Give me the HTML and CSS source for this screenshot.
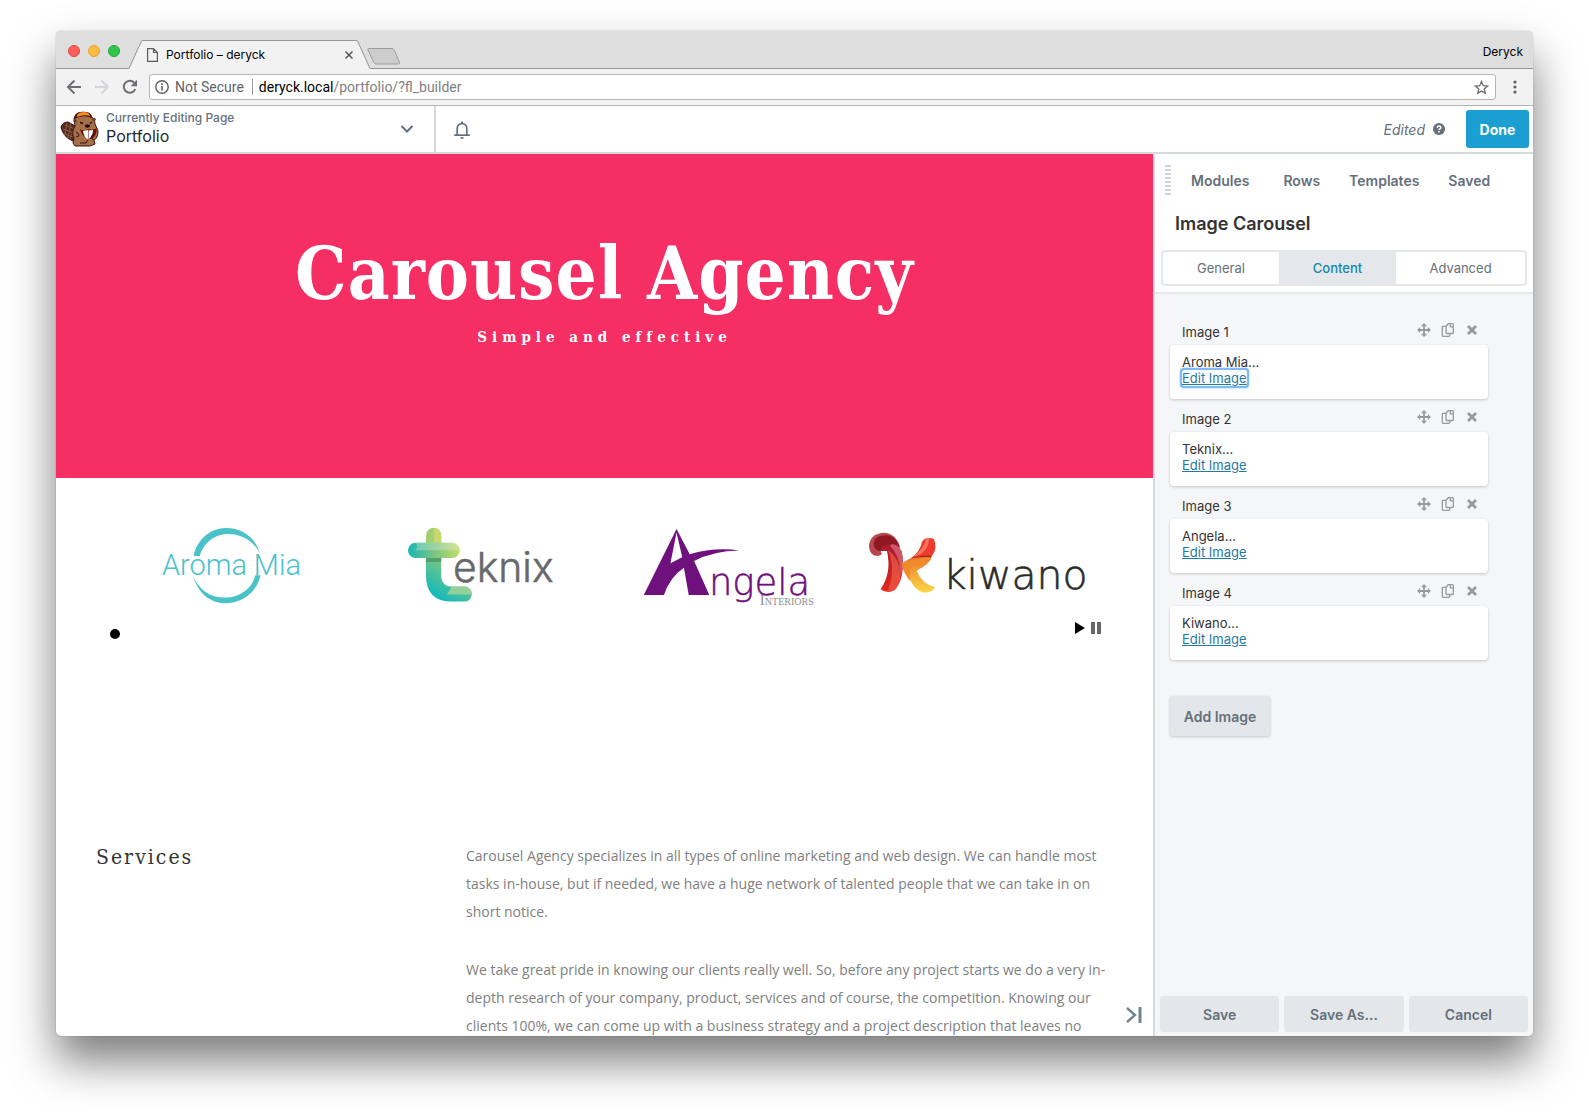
FILE: index.html
```html
<!DOCTYPE html>
<html lang="en">
<head>
<meta charset="utf-8">
<title>Portfolio – deryck</title>
<link rel="stylesheet" href="styles.css">
</head>
<body>
<svg width="0" height="0" class="defs" aria-hidden="true">
  <symbol id="i-move" viewBox="0 0 14 14"><path d="M7 0l3 3.200H7.900v2.900h2.900V4L14 7l-3.200 3V7.900H7.900v2.900H10L7 14l-3-3.200h2.100V7.900H3.200V10L0 7l3.200-3v2.100h2.900V3.200H4z"/></symbol>
  <symbol id="i-copy" viewBox="0 0 14 14"><path fill="none" stroke="currentColor" stroke-width="1.300" stroke-linejoin="round" d="M5 3.200L7.200.7h4.400a.7.7 0 0 1 .7.7v8.400a.7.7 0 0 1-.7.700H5.700a.7.7 0 0 1-.7-.7zM9.300.9v2.900h2.800M5 3.300H2a.7.7 0 0 0-.7.7v8.600a.7.7 0 0 0 .7.700h6a.7.7 0 0 0 .7-.7v-2"/></symbol>
  <symbol id="i-x" viewBox="0 0 14 14"><path fill="none" stroke="currentColor" stroke-width="2.800" d="M3 3l8 8M11 3l-8 8"/></symbol>
</svg>

<div class="window">
  <div class="tabstrip">
    <div class="lights"><span class="light red"></span><span class="light yellow"></span><span class="light green"></span></div>
    <div class="tab">
      <svg class="tab-shape" viewBox="0 0 244 29"><path d="M0 28.500h1L13 2q.7-1.500 2-1.500H228q1.300 0 2 1.500L242 28.500h2V29H0z" fill="#f2f2f2"/><path d="M0 28.500h1L13 2q.7-1.500 2-1.500H228q1.300 0 2 1.500L242 28.500h2" fill="none" stroke="#949494"/></svg>
      <svg class="doc" width="11" height="14" viewBox="0 0 11 14" fill="none" stroke="#5c5c5c" stroke-width="1.200"><path d="M.6.6h5.900l3.900 3.900v8.900H.6zM6.500.6v3.900h3.900"/></svg>
      <span class="tab-title">Portfolio – deryck</span>
      <button class="tab-close" aria-label="Close tab"><svg width="8" height="8" viewBox="0 0 8 8" stroke="#555" stroke-width="1.500"><path d="M.5.5l7 7M7.500.5l-7 7"/></svg></button>
    </div>
    <button class="new-tab" aria-label="New tab"><svg width="34" height="17" viewBox="0 0 34 17"><path d="M1.500.5H25q1.500 0 2.200 1.500L32.500 14.500q.6 1.500-1 1.500H9Q7.500 16 6.800 14.500L1 2Q.5.500 1.500.5z" fill="#cdcdcd" stroke="#9d9d9d"/></svg></button>
    <span class="profile">Deryck</span>
  </div>

  <div class="toolbar">
    <button class="nav" aria-label="Back"><svg width="16" height="16" viewBox="0 0 16 16" fill="none" stroke="#6e6f73" stroke-width="2"><path d="M15 8H2M8.500 1.500L2 8l6.500 6.500"/></svg></button>
    <button class="nav" aria-label="Forward"><svg width="16" height="16" viewBox="0 0 16 16" fill="none" stroke="#d4d5d8" stroke-width="2"><path d="M1 8h13M7.500 1.500L14 8l-6.500 6.500"/></svg></button>
    <button class="nav" aria-label="Reload"><svg width="16" height="16" viewBox="0 0 16 16"><path d="M13.300 10.200A6 6 0 1 1 12.300 3.800" fill="none" stroke="#6e6f73" stroke-width="2"/><path d="M15 .8v6.400H8.600z" fill="#6e6f73"/></svg></button>
    <div class="address">
      <svg width="14" height="14" viewBox="0 0 14 14"><circle cx="7" cy="7" r="6.200" fill="none" stroke="#5e5f63" stroke-width="1.400"/><path d="M6.200 6h1.600v4.500H6.200zM6.200 3.300h1.600v1.600H6.200z" fill="#5e5f63"/></svg>
      <span class="secure">Not Secure</span>
      <span class="url"><b>deryck.local</b>/portfolio/?fl_builder</span>
      <svg class="star" width="15" height="15" viewBox="0 0 15 15" fill="none" stroke="#6b6c70" stroke-width="1.300"><path d="M7.500 1.500l1.700 4.200 4.500.3-3.500 2.900 1.100 4.400-3.800-2.400-3.800 2.400 1.100-4.400L1.300 6l4.500-.3z"/></svg>
    </div>
    <button class="menu" aria-label="Menu"><svg width="4" height="14" viewBox="0 0 4 14" fill="#5e5f63"><circle cx="2" cy="2" r="1.600"/><circle cx="2" cy="7" r="1.600"/><circle cx="2" cy="12" r="1.600"/></svg></button>
  </div>

  <header class="builder-bar">
    <button class="page-menu">
      <svg class="beaver" width="39" height="36" viewBox="0 0 39 36">
        <path d="M1 16Q3 11 8 11l9 5-4 14Q3 26 1 16z" fill="#572a20" stroke="#35120e"/>
        <path d="M3 18l11 4M5 14l10 4M4 23l9 3M7 12L5 24M11 12l-3 15M15 15l-5 13" stroke="#946246" stroke-width=".9"/>
        <path d="M14 7Q20 2 29 4q6 3 6 9l3 7q0 7-4 9l1 4-5 2H15l-2-3 1-5Q11 22 15 15z" fill="#a56f48" stroke="#3b150f"/>
        <path d="M14 8Q14 1 22 .8q8-.8 10 4.200v2Q23 3 14 8z" fill="#4a1512"/>
        <path d="M17 4q2-3 7-3 5 0 6 4-6-2-13 1z" fill="#f48a24"/>
        <circle cx="15" cy="10" r="1.800" fill="#6d3a25"/><circle cx="34" cy="8.500" r="1.800" fill="#6d3a25"/>
        <path d="M20 11.500l3 1M32 11l-2 1.500" stroke="#2c0f0c" stroke-width="1.500"/>
        <path d="M20 18q4 3 8 0 5 2 9-1-1 11-7 11-8-1-10-10z" fill="#6a100d"/>
        <ellipse cx="27.500" cy="15" rx="2.600" ry="1.700" fill="#220b0a"/>
        <path d="M23 20l5-1v9q-4-1-5-8zM28.500 19.500L33 19q0 7-4.500 9z" fill="#fff"/>
        <path d="M16 21q3 1 3 4l-3 1M34 23q-3 1-3 4l3 2M20 32h6l2-3" fill="none" stroke="#3b150f"/>
      </svg>
      <span class="page-text"><small>Currently Editing Page</small><span>Portfolio</span></span>
      <svg class="chev" width="14" height="8" viewBox="0 0 14 8" fill="none" stroke="#65707b" stroke-width="2"><path d="M1.500 1L7 6.500 12.500 1"/></svg>
    </button>
    <button class="bell" aria-label="Notifications"><svg width="16" height="18" viewBox="0 0 16 18"><path d="M3.200 14V7.500C3.200 4.600 5.300 2.600 8 2.600s4.800 2 4.800 4.900V14" fill="none" stroke="#65707b" stroke-width="1.700"/><path d="M7 .5h2v2H7zM.2 13.200h15.600V15H.2zM6 16.200h4Q9.700 18 8 18t-2-1.800z" fill="#65707b"/></svg></button>
    <span class="edited">Edited</span>
    <svg class="help" width="12" height="12" viewBox="0 0 12 12"><circle cx="6" cy="6" r="6" fill="#65707b"/><path d="M4.200 4.700Q4.300 3 6 3t1.800 1.500Q7.800 5.500 6.800 6q-.8.4-.8 1.100" fill="none" stroke="#fff" stroke-width="1.500"/><path d="M5.200 8h1.600v1.500H5.200z" fill="#fff"/></svg>
    <button class="done">Done</button>
  </header>

  <div class="workspace">
    <main class="site">
      <section class="hero">
        <h1>Carousel Agency</h1>
        <p>Simple and effective</p>
      </section>

      <section class="carousel">
        <div class="slides">
          <svg viewBox="0 0 250 100" role="img" aria-label="Aroma Mia">
            <g fill="#49c2c8"><path d="M88.700 39C92 22 106 11 121 11C138 11 151 21 155 36.500C149 24 137 17 123 17C109 17 98 27 95 39z"/><path d="M88.300 59C93 76 105 86.300 121 86.300C138 86.300 152 75 155.700 58.300H150.300C148 71 135 80.700 120 80.700C105 80.700 94 73 88.300 59z"/>
            <text x="57" y="58" class="aroma">Aroma</text><text x="149" y="58" class="aroma">Mia</text></g>
          </svg>
          <svg viewBox="0 0 250 100" role="img" aria-label="teknix">
            <defs>
              <linearGradient id="t1" x1="0" x2="1"><stop offset="0" stop-color="#16b8b4"/><stop offset=".45" stop-color="#72c287"/><stop offset="1" stop-color="#c5dc6a"/></linearGradient>
              <linearGradient id="t2" gradientUnits="userSpaceOnUse" x1="78" y1="75" x2="98" y2="45"><stop offset="0" stop-color="#19bab8"/><stop offset="1" stop-color="#8bc878"/></linearGradient>
            </defs>
            <path d="M71 27v-8.500a7.600 7.600 0 0 1 15.300 0V27z" fill="#a3cf73"/><path d="M79 11a7.600 7.600 0 0 1 7.300 7.500V27H79z" fill="#c5d96d"/>
            <path d="M71 40v18q0 26.700 26 26.700h12.500a7.500 7.500 0 0 0 0-15H98Q86.300 69.700 86.300 58V40z" fill="url(#t2)"/>
            <path d="M97 69.700h12.500q7 0 7.500 8H92z" fill="#a5d49a" opacity=".8"/>
            <path d="M71 40h15.300v5H71z" fill="#48925f" opacity=".7"/>
            <rect x="53" y="25.700" width="52" height="15.300" rx="7.600" fill="url(#t1)"/>
            <path d="M60.600 25.700h36.800q7.600 0 7.600 7.600H60q4-3 .6-7.600z" fill="#fff" opacity=".25"/>
            <text x="98" y="65" class="teknix">eknix</text>
          </svg>
          <svg viewBox="0 0 250 100" role="img" aria-label="Angela Interiors">
            <path fill="#6f117c" fill-rule="evenodd" d="M71.600 12L38.800 78H59Q65 60 79 50.700L83.800 78h20.600L89.200 44Q108 34 134.500 33.500Q109 30 84.800 37.300zM71.600 15.500L65.500 46.300L77.300 40.300z"/>
            <text x="104" y="78" class="angela">ngela</text><text x="155" y="88" class="interiors">Interiors</text>
          </svg>
          <svg viewBox="0 0 250 100" role="img" aria-label="kiwano">
            <defs>
              <linearGradient id="k1" x1="0" x2="0" y1="0" y2="1"><stop offset="0" stop-color="#a81c2d"/><stop offset="1" stop-color="#e2261d"/></linearGradient>
              <linearGradient id="k2" x1="0" x2="0" y1="0" y2="1"><stop offset="0" stop-color="#ee7623"/><stop offset="1" stop-color="#fbd84c"/></linearGradient>
            </defs>
            <path d="M46 30Q42 16 29.500 15.700Q15 17 15 30Q16 39 24 39L27.800 37.500L26.800 34L34 28z" fill="#b8484f"/>
            <path d="M19.700 25Q22 18 32 18.300Q43 19 46 32Q34 24 25 34Q19 32 19.700 25z" fill="#8f1822"/>
            <path d="M25 34Q29 27 36 27Q47 28 48.400 38Q51 62 40.700 73Q34 77.500 26.500 72.300Q38 56 33 34z" fill="url(#k1)"/>
            <path d="M38 27Q47 28 48.400 38Q50 48 47 59Q46 38 36 29z" fill="#d0566b"/>
            <path d="M34 33Q46 42 47 57Q46 67 41 73Q36 75 34 74Q42 52 34 33z" fill="#f0644c" opacity=".65"/>
            <path d="M55 43Q67 34 68 25Q71 19 80 22Q84 31 78 39Q70 45 55 43z" fill="#ee3a2d"/>
            <path d="M58 40Q71 32 72 21Q77 19 74 28Q71 38 58 40z" fill="#f98366" opacity=".8"/>
            <path d="M54 43Q65 38 78 39Q70 46 54 43z" fill="#861d1b"/>
            <path d="M47.800 46.300Q57 39 77.800 40Q76 47 62.600 53.700Q68 67 81.200 70.300Q78 76 69.400 75.700Q60 73 56 62z" fill="url(#k2)"/>
            <path d="M47.800 47Q60 42 77 40.500Q69 49 58 50Q54 56 57 65Q49 56 47.800 47z" fill="#f08a2d"/>
            <text x="89" y="72" class="kiwano">kiwano</text>
          </svg>
        </div>
        <div class="controls">
          <button class="dot" aria-label="Slide 1"></button>
          <span class="playback">
            <button aria-label="Play"><svg width="10" height="12" viewBox="0 0 10 12"><path d="M0 0l10 6-10 6z"/></svg></button>
            <button aria-label="Pause"><svg width="10" height="12" viewBox="0 0 10 12" fill="#666"><path d="M0 0h4v12H0zM6 0h4v12H6z"/></svg></button>
          </span>
        </div>
      </section>

      <section class="services">
        <h2>Services</h2>
        <div class="copy">
          <p>Carousel Agency specializes in all types of online marketing and web design. We can handle most tasks in-house, but if needed, we have a huge network of talented people that we can take in on short notice.</p>
          <p>We take great pride in knowing our clients really well. So, before any project starts we do a very in-depth research of your company, product, services and of course, the competition. Knowing our clients 100%, we can come up with a business strategy and a project description that leaves no</p>
        </div>
      </section>
      <button class="collapse" aria-label="Collapse panel"><svg width="16" height="16" viewBox="0 0 16 16"><path d="M1 1l8 7-8 7" fill="none" stroke="#71838f" stroke-width="2.400"/><path d="M12.500 0h3v16h-3z" fill="#71838f"/></svg></button>
    </main>

    <aside class="panel">
      <div class="panel-head">
        <nav class="sections">
          <span class="grip"></span>
          <a href="#modules">Modules</a><a href="#rows">Rows</a><a href="#templates">Templates</a><a href="#saved">Saved</a>
        </nav>
        <h2>Image Carousel</h2>
        <div class="segments"><button>General</button><button class="active">Content</button><button>Advanced</button></div>
      </div>
      <div class="panel-body">
        <article class="item"><div class="item-head"><span>Image 1</span><span class="tools"><button aria-label="Move"><svg><use href="#i-move"/></svg></button><button aria-label="Copy"><svg><use href="#i-copy"/></svg></button><button aria-label="Remove"><svg><use href="#i-x"/></svg></button></span></div><div class="card">Aroma Mia...<br><a href="#edit1" class="focused">Edit Image</a></div></article>
        <article class="item"><div class="item-head"><span>Image 2</span><span class="tools"><button aria-label="Move"><svg><use href="#i-move"/></svg></button><button aria-label="Copy"><svg><use href="#i-copy"/></svg></button><button aria-label="Remove"><svg><use href="#i-x"/></svg></button></span></div><div class="card">Teknix...<br><a href="#edit2">Edit Image</a></div></article>
        <article class="item"><div class="item-head"><span>Image 3</span><span class="tools"><button aria-label="Move"><svg><use href="#i-move"/></svg></button><button aria-label="Copy"><svg><use href="#i-copy"/></svg></button><button aria-label="Remove"><svg><use href="#i-x"/></svg></button></span></div><div class="card">Angela...<br><a href="#edit3">Edit Image</a></div></article>
        <article class="item"><div class="item-head"><span>Image 4</span><span class="tools"><button aria-label="Move"><svg><use href="#i-move"/></svg></button><button aria-label="Copy"><svg><use href="#i-copy"/></svg></button><button aria-label="Remove"><svg><use href="#i-x"/></svg></button></span></div><div class="card">Kiwano...<br><a href="#edit4">Edit Image</a></div></article>
        <button class="add">Add Image</button>
      </div>
      <footer class="panel-foot"><button>Save</button><button>Save As...</button><button>Cancel</button></footer>
    </aside>
  </div>
</div>
</body>
</html>
```
FILE: styles.css
```css
* { box-sizing: border-box; }
body {
  margin: 0;
  padding: 31px 56px 80px;
  height: 100vh;
  background: #fff;
  font-family: Inter, "Liberation Sans", sans-serif;
  font-size: 13px;
  color: #333;
}
button {
  margin: 0;
  padding: 0;
  border: 0;
  background: none;
  font: inherit;
  color: inherit;
  display: flex;
  align-items: center;
  justify-content: center;
}
h1, h2, p { margin: 0; }
svg { display: block; flex: none; }
.defs { position: absolute; }

.window {
  height: 100%;
  display: flex;
  flex-direction: column;
  overflow: hidden;
  border-radius: 5px;
  background: #fff;
  box-shadow: 0 25px 45px rgba(0, 0, 0, .52), 0 0 1px rgba(0, 0, 0, .5);
}

/* Browser tabs */
.tabstrip {
  flex: none;
  height: 38px;
  display: flex;
  align-items: flex-end;
  background: #dedede;
  border-bottom: 1px solid #949494;
  color: #000;
}
.lights { display: flex; gap: 8px; padding: 0 8px 11px 12px; }
.light { width: 12px; height: 12px; border-radius: 50%; border: 1px solid #e0443e; background: #fc605b; }
.yellow { border-color: #e0a32e; background: #fdbc40; }
.green { border-color: #1fa535; background: #30c748; }
.tab {
  position: relative;
  width: 244px;
  height: 29px;
  margin-bottom: -1px;
  display: flex;
  align-items: center;
  gap: 8px;
  padding: 0 19px 0 19px;
}
.tab-shape { position: absolute; left: 0; top: 0; width: 100%; height: 100%; }
.doc, .tab-title, .tab-close { position: relative; }
.tab-title { flex: 1; font-size: 12px; }
.new-tab { margin: 0 0 3px -5px; }
.profile { margin-left: auto; padding: 0 10px 9px 0; font-size: 12px; }

/* Address row */
.toolbar {
  flex: none;
  height: 37px;
  display: flex;
  align-items: center;
  gap: 12px;
  padding: 0 16px 0 10px;
  background: #f2f2f2;
  border-bottom: 1px solid #b3b3b3;
  font-family: Roboto, "Liberation Sans", sans-serif;
  font-size: 14px;
}
.nav { width: 16px; height: 16px; }
.address {
  flex: 1;
  height: 26px;
  display: flex;
  align-items: center;
  gap: 6px;
  padding: 0 6px 0 5px;
  margin: 0 5px 0 -1px;
  background: #fff;
  border: 1px solid #b5b5b5;
  border-radius: 3px;
  color: #808080;
}
.secure { padding-right: 8px; border-right: 1px solid #9a9a9a; color: #5f6368; }
.url { flex: 1; }
.url b { font-weight: 400; color: #000; }

/* Builder bar */
.builder-bar {
  flex: none;
  height: 48px;
  display: flex;
  align-items: center;
  padding-right: 4px;
  border-bottom: 2px solid #d5dadd;
  color: #65707b;
}
.page-menu {
  width: 380px;
  height: 100%;
  padding: 0 20px 0 4px;
  justify-content: flex-start;
  border-right: 2px solid #d5dadd;
  text-align: left;
}
.page-text { flex: 1; display: flex; flex-direction: column; padding: 0 0 4px 7px; font-size: 16px; line-height: 18px; color: #23282d; }
.page-text small { font-size: 12px; font-weight: 500; color: #65707b; }
.bell { margin: 2px auto 0 18px; }
.edited { font-size: 14px; font-style: italic; }
.help { margin: 0 21px 0 8px; }
.done {
  width: 63px;
  height: 38px;
  border-radius: 3px;
  background: #1a9fd0;
  color: #fff;
  font-size: 14px;
  font-weight: 700;
}

.workspace { flex: 1; min-height: 0; display: flex; }

/* Edited page */
.site { position: relative; flex: 1; min-width: 0; overflow: hidden; }
.hero {
  height: 324px;
  padding-top: 73px;
  background: #f52e63;
  color: #fff;
  text-align: center;
  font-family: "Roboto Slab", "DejaVu Serif Condensed", "DejaVu Serif", serif;
  font-weight: 700;
}
.hero h1 { font-size: 72px; line-height: 94px; letter-spacing: 1px; }
.hero p { font-size: 15px; line-height: 32px; letter-spacing: 5px; }
.carousel { padding: 39px 49px 0; }
.slides { display: grid; grid-template-columns: repeat(4, 1fr); }
.slides svg { width: 100%; }
.aroma { font: 300 29px Roboto, sans-serif; }
.teknix { font: 300 41px Inter, sans-serif; fill: #67686c; stroke: #67686c; stroke-width: .5; }
.angela { font: 200 37px "DejaVu Sans", sans-serif; fill: #6f117c; stroke: #6f117c; stroke-width: .5; }
.interiors { font: 15px "Liberation Serif", serif; font-variant: small-caps; fill: #8f8f8f; }
.kiwano { font: 200 41px "DejaVu Sans", sans-serif; fill: #2b2b2b; stroke: #2b2b2b; stroke-width: .6; }
.controls { display: flex; justify-content: space-between; padding: 5px 3px 0 5px; }
.dot { width: 10px; height: 10px; margin-top: 7px; border-radius: 50%; background: #000; }
.playback { display: flex; align-items: flex-start; gap: 6px; }
.services { display: grid; grid-template-columns: 370px 1fr; padding: 203px 40px 0; }
.services h2 { font: 400 21px/30px "Roboto Slab", "DejaVu Serif Condensed", "DejaVu Serif", serif; letter-spacing: 2px; color: #333; }
.copy { font: 14px/28px "Open Sans", sans-serif; color: #808080; }
.copy p { margin-bottom: 30px; }
.collapse { position: absolute; right: 11px; bottom: 13px; }

/* Settings panel */
.panel {
  flex: none;
  width: 380px;
  display: flex;
  flex-direction: column;
  border-left: 2px solid #d5dadd;
  background: #f5f6f8;
}
.panel-head { background: #fff; border-bottom: 2px solid #e5e8eb; padding: 9px 6px 6px; }
.sections { display: flex; align-items: center; height: 34px; padding-left: 4px; font-size: 14px; font-weight: 600; }
.sections a { color: #65707b; text-decoration: none; margin-right: 34px; }
.sections a + a { margin-right: 29px; }
.grip { width: 6px; height: 30px; margin-right: 20px; background: repeating-linear-gradient(#ccd2d8 0 2px, #fff 2px 4px); }
.panel-head h2 { padding: 15px 14px 14px; font-size: 18px; line-height: 24px; font-weight: 600; }
.segments { display: grid; grid-template-columns: 116fr 117fr 129fr; height: 36px; border: 2px solid #e5e8eb; border-radius: 4px; font-size: 13px; color: #65707b; }
.segments .active { background: #e5e8eb; color: #1487ae; font-weight: 500; }
.panel-body { flex: 1; min-height: 0; padding: 22px 45px 0 15px; }
.item-head { display: flex; align-items: center; justify-content: space-between; height: 29px; padding: 3px 9px 0 12px; }
.item { margin-bottom: 4px; }
.tools { display: flex; gap: 10px; color: #999; fill: #999; padding-bottom: 4px; }
.tools svg { width: 14px; height: 14px; }
.card { height: 54px; padding: 9px 12px; border-radius: 4px; background: #fff; line-height: 16px; box-shadow: 0 1px 3px rgba(0, 0, 0, .2); }
.card a { color: #1f7ba3; }
.card .focused { border-radius: 2px; box-shadow: 0 0 0 2px #80b9f7, 0 0 2px 2px #80b9f7; }
.add { width: 100px; height: 40px; margin-top: 36px; border-radius: 3px; background: #e3e7ea; box-shadow: 0 1px 3px rgba(0, 0, 0, .2); color: #65707b; font-size: 14px; font-weight: 600; }
.panel-foot { display: grid; grid-template-columns: repeat(3, 1fr); gap: 5px; padding: 0 5px 4px; }
.panel-foot button { height: 36px; border-radius: 3px; background: #e3e7ea; color: #65707b; font-size: 14px; font-weight: 600; }
```
